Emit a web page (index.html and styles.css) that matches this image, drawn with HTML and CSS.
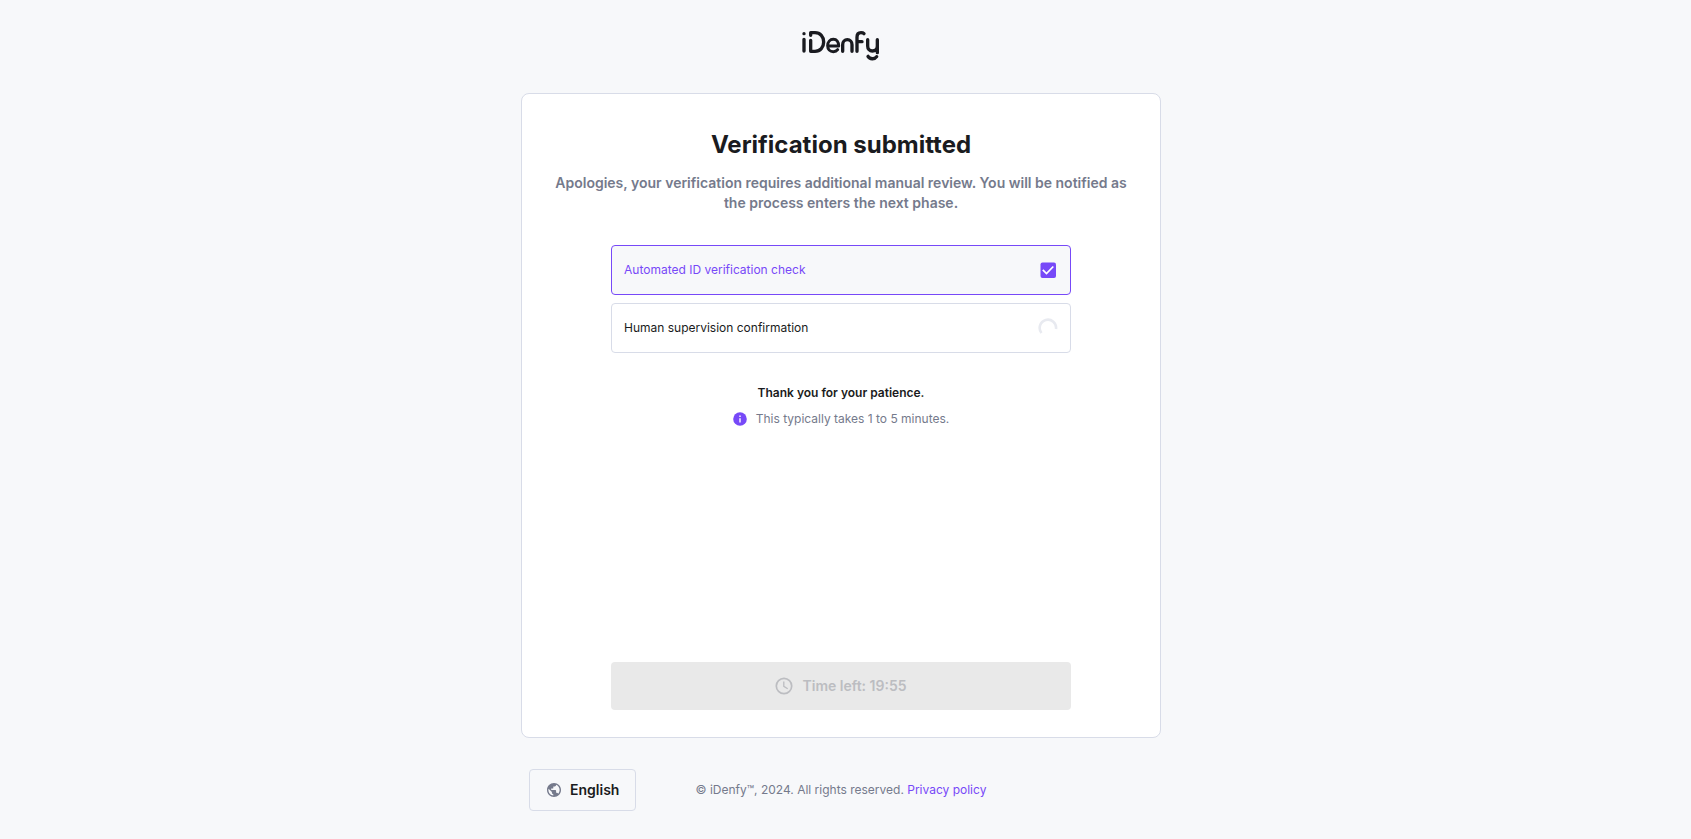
FILE: index.html
```html
<!DOCTYPE html>
<html lang="en">
<head>
<meta charset="utf-8">
<meta name="viewport" content="width=device-width, initial-scale=1">
<title>Verification submitted</title>
<link rel="stylesheet" href="styles.css">
</head>
<body>
<div class="page">
  <header class="header">
    <svg class="logo" viewBox="66 30 234 93" role="img" aria-label="iDenfy" fill="none" stroke="currentColor" stroke-width="10" stroke-linecap="round" stroke-linejoin="round">
      <path d="M72 41v.1M72 58v35"/>
      <path d="M92 46V38H105C121 38 131 50 131 66S121 94 105 94H92V61"/>
      <path stroke-width="9" d="M144 78H176C176 66 170 58 160 58C150 58 143 66 143 77C143 88 150 95 160 95C166 95 170 93 173 89"/>
      <path d="M188 94V74C188 65 194 59 202 59S216 65 216 74V94"/>
      <path d="M231 94V52C231 43 236 38 243 38C247 38 250 39 252 41M231 65H246"/>
      <path d="M263 59V78C263 87 269 93 277 93C285 93 292 87 292 78V59V98M264 109C269 118 284 119 290 110"/>
    </svg>
  </header>
  <main class="card">
    <h1 class="title">Verification submitted</h1>
    <p class="subtitle">Apologies, your verification requires additional manual review. You will be notified as the process enters the next phase.</p>
    <ul class="steps">
      <li class="step step-done">
        <span>Automated ID verification check</span>
        <svg class="step-icon" viewBox="0 0 20 20" aria-hidden="true">
          <rect x="2.500" y="2.500" width="15.500" height="15.500" rx="2" fill="currentColor"/>
          <path d="M4.800 9.800l3.700 3.700L15.300 6.500" fill="none" stroke="#fff" stroke-width="1.700"/>
        </svg>
      </li>
      <li class="step">
        <span>Human supervision confirmation</span>
        <svg class="step-icon spinner" viewBox="0 0 20 20" aria-hidden="true">
          <path d="M3.500 15A8.200 8.200 0 1 1 18 11" fill="none" stroke="currentColor" stroke-width="2.600"/>
        </svg>
      </li>
    </ul>
    <p class="thanks">Thank you for your patience.</p>
    <p class="hint">
      <svg class="icon-info" viewBox="0 0 14 14" aria-hidden="true">
        <circle cx="7" cy="7" r="6.800" fill="currentColor"/>
        <path d="M7 6.200v4.200M7 3.500v1.400" stroke="#fff" stroke-width="1.400"/>
      </svg>
      <span>This typically takes 1 to 5 minutes.</span>
    </p>
    <button class="timer" type="button" disabled>
      <svg class="icon-clock" viewBox="0 0 18 18" aria-hidden="true" fill="none" stroke="currentColor">
        <circle cx="9" cy="9" r="7.700" stroke-width="1.700"/>
        <path d="M8.800 4.500V9.300L12.700 11.700" stroke-width="1.300"/>
      </svg>
      <span>Time left: 19:55</span>
    </button>
  </main>
  <footer class="footer">
    <button class="language" type="button">
      <svg class="icon-globe" viewBox="2 2 20 20" aria-hidden="true">
        <path fill="currentColor" d="M12 2C6.480 2 2 6.480 2 12s4.480 10 10 10 10-4.480 10-10S17.520 2 12 2zm-1 17.930c-3.950-.49-7-3.850-7-7.930 0-.62.080-1.210.210-1.790L9 15v1c0 1.100.9 2 2 2v1.930zm6.900-2.540c-.26-.81-1-1.390-1.900-1.390h-1v-3c0-.55-.45-1-1-1H8v-2h2c.55 0 1-.45 1-1V7h2c1.100 0 2-.9 2-2v-.41c2.930 1.190 5 4.060 5 7.410 0 2.080-.8 3.970-2.100 5.390z"/>
      </svg>
      <span>English</span>
    </button>
    <p class="legal">© iDenfy™, 2024. All rights reserved. <a class="link" href="#">Privacy policy</a></p>
  </footer>
</div>
</body>
</html>
```
FILE: styles.css
```css
* {
  box-sizing: border-box;
}

body {
  margin: 0;
  background: #f7f8fa;
  color: #1a1b20;
  font-family: Inter, "Liberation Sans", sans-serif;
  font-size: 12px;
  line-height: 16px;
}

h1, p, ul {
  margin: 0;
  padding: 0;
}

button {
  font: inherit;
}

svg {
  display: block;
  flex: none;
}

.page {
  display: flex;
  flex-direction: column;
  align-items: center;
  min-height: 100vh;
  padding: 30px 9px 28px 0;
}

.header {
  margin-bottom: 32px;
}

.logo {
  width: 78px;
  height: 31px;
}

.card {
  display: flex;
  flex-direction: column;
  align-items: center;
  flex: 1;
  width: 100%;
  max-width: 640px;
  padding: 35px 32px 27px;
  background: #fff;
  border: 1px solid #d8dce8;
  border-radius: 8px;
}

.title {
  margin-bottom: 12px;
  font-size: 24px;
  font-weight: 700;
  line-height: 32px;
  text-align: center;
}

.subtitle {
  margin-bottom: 32px;
  color: #757a8c;
  font-size: 14px;
  font-weight: 600;
  line-height: 20px;
  text-align: center;
}

.steps {
  display: flex;
  flex-direction: column;
  gap: 8px;
  width: 100%;
  max-width: 460px;
  margin-bottom: 32px;
  list-style: none;
}

.step {
  display: flex;
  align-items: center;
  justify-content: space-between;
  height: 50px;
  padding: 0 12px;
  border: 1px solid #d8dce8;
  border-radius: 4px;
}

.step-done {
  background: #f7f8fa;
  border-color: #7749f8;
  color: #7749f8;
}

.step-icon {
  width: 20px;
  height: 20px;
}

.spinner {
  color: #e8eaf0;
}

.thanks {
  margin-bottom: 10px;
  font-weight: 600;
}

.hint {
  display: flex;
  align-items: center;
  gap: 9px;
  color: #757a8c;
}

.icon-info {
  width: 14px;
  height: 14px;
  color: #7749f8;
}

.timer {
  display: flex;
  align-items: center;
  justify-content: center;
  gap: 9px;
  width: 100%;
  max-width: 460px;
  height: 48px;
  margin-top: auto;
  border: 0;
  border-radius: 4px;
  background: #e9e9e9;
  color: #bcbdc1;
  font-size: 14px;
  font-weight: 600;
}

.icon-clock {
  width: 18px;
  height: 18px;
}

.footer {
  display: grid;
  grid-template-columns: 1fr auto 1fr;
  align-items: center;
  width: 100%;
  max-width: 640px;
  margin-top: 31px;
  padding: 0 8px;
}

.language {
  display: flex;
  align-items: center;
  justify-self: start;
  gap: 9px;
  height: 42px;
  padding: 0 16px 0 17px;
  border: 1px solid #d8dce8;
  border-radius: 4px;
  background: transparent;
  color: #1a1b20;
  font-size: 14px;
  font-weight: 600;
}

.icon-globe {
  width: 14px;
  height: 14px;
  color: #757a8c;
}

.legal {
  color: #757a8c;
}

.link {
  color: #7749f8;
  text-decoration: none;
}
```
